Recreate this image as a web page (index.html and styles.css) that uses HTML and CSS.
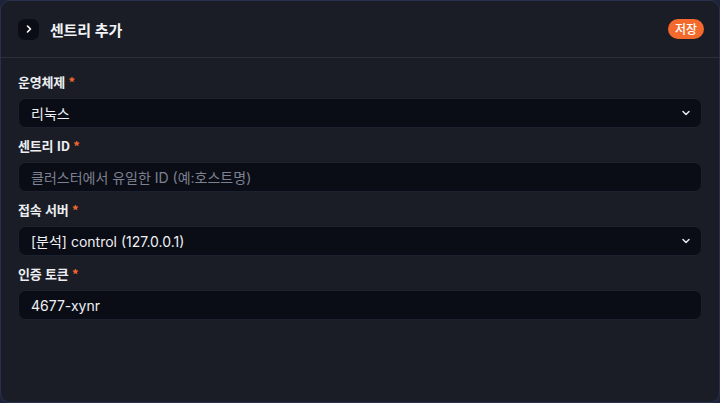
FILE: index.html
```html
<!DOCTYPE html>
<html lang="ko">
<head>
<meta charset="utf-8">
<link rel="stylesheet" href="styles.css">
</head>
<body>
<div class="panel">
  <header class="head">
    <div class="head-left">
      <button class="toggle" type="button">
        <svg width="10" height="10" viewBox="0 0 10 10"><path d="M3.5 2 L6.5 5 L3.5 8" fill="none" stroke="#fff" stroke-width="1.6" stroke-linecap="round" stroke-linejoin="round"/></svg>
      </button>
      <h1 class="title">센트리 추가</h1>
    </div>
    <button class="save" type="button">저장</button>
  </header>
  <div class="body">
    <div class="field">
      <label class="label">운영체제 <span class="req">*</span></label>
      <div class="input select"><span>리눅스</span>
        <svg class="chev" width="10" height="10" viewBox="0 0 10 10"><path d="M2 3.5 L5 6.5 L8 3.5" fill="none" stroke="#e8e8ec" stroke-width="1.5" stroke-linecap="round" stroke-linejoin="round"/></svg>
      </div>
    </div>
    <div class="field">
      <label class="label">센트리 ID <span class="req">*</span></label>
      <div class="input"><span class="ph">클러스터에서 유일한 ID (예:호스트명)</span></div>
    </div>
    <div class="field">
      <label class="label">접속 서버 <span class="req">*</span></label>
      <div class="input select"><span>[분석] control (127.0.0.1)</span>
        <svg class="chev" width="10" height="10" viewBox="0 0 10 10"><path d="M2 3.5 L5 6.5 L8 3.5" fill="none" stroke="#e8e8ec" stroke-width="1.5" stroke-linecap="round" stroke-linejoin="round"/></svg>
      </div>
    </div>
    <div class="field">
      <label class="label">인증 토큰 <span class="req">*</span></label>
      <div class="input"><span>4677-xynr</span></div>
    </div>
  </div>
</div>
</body>
</html>
```
FILE: styles.css
```css
* { box-sizing: border-box; }
html, body { margin: 0; height: 100%; }
body {
  background: #1d2339;
  font-family: "Inter", "Noto Sans CJK KR", sans-serif;
  color: #f1f2f5;
}
.panel {
  height: 403px;
  background: #1a1d26;
  border: 1px solid #2a3150;
  border-radius: 10px;
  overflow: hidden;
}
.head {
  height: 57px;
  border-bottom: 1px solid #2c303d;
  display: flex;
  align-items: center;
  justify-content: space-between;
  padding: 0 15px 0 17px;
}
.head-left { display: flex; align-items: center; gap: 11px; }
.toggle {
  width: 21px; height: 21px;
  border: none; border-radius: 7px;
  background: #0a0d14;
  display: flex; align-items: center; justify-content: center;
  padding: 0;
}
.title {
  margin: 0;
  font-family: "Noto Sans CJK KR", sans-serif;
  font-size: 15px;
  font-weight: 700;
  color: #f3f4f7;
  letter-spacing: -0.2px;
}
.save {
  height: 20px;
  padding: 0 7px;
  border: none;
  border-radius: 10px;
  background: #f46a2c;
  color: #fff;
  font-family: "Noto Sans CJK KR", sans-serif;
  font-size: 12px;
  font-weight: 500;
  line-height: 20px;
}
.body {
  padding: 15px 17px 0 17px;
  display: flex;
  flex-direction: column;
  gap: 9px;
}
.field { display: flex; flex-direction: column; gap: 7px; }
.label {
  height: 18px;
  line-height: 18px;
  font-family: "Noto Sans CJK KR", sans-serif;
  font-size: 13px;
  font-weight: 700;
  color: #eceef2;
  letter-spacing: -0.2px;
}
.req { color: #f46a2c; }
.input {
  height: 30px;
  background: #0a0d15;
  border: 1px solid #1c2130;
  border-radius: 8px;
  display: flex;
  align-items: center;
  justify-content: space-between;
  padding: 0 10px 0 12px;
  font-size: 14px;
  color: #eef0f4;
}
.ph { color: #7d8190; }
```
